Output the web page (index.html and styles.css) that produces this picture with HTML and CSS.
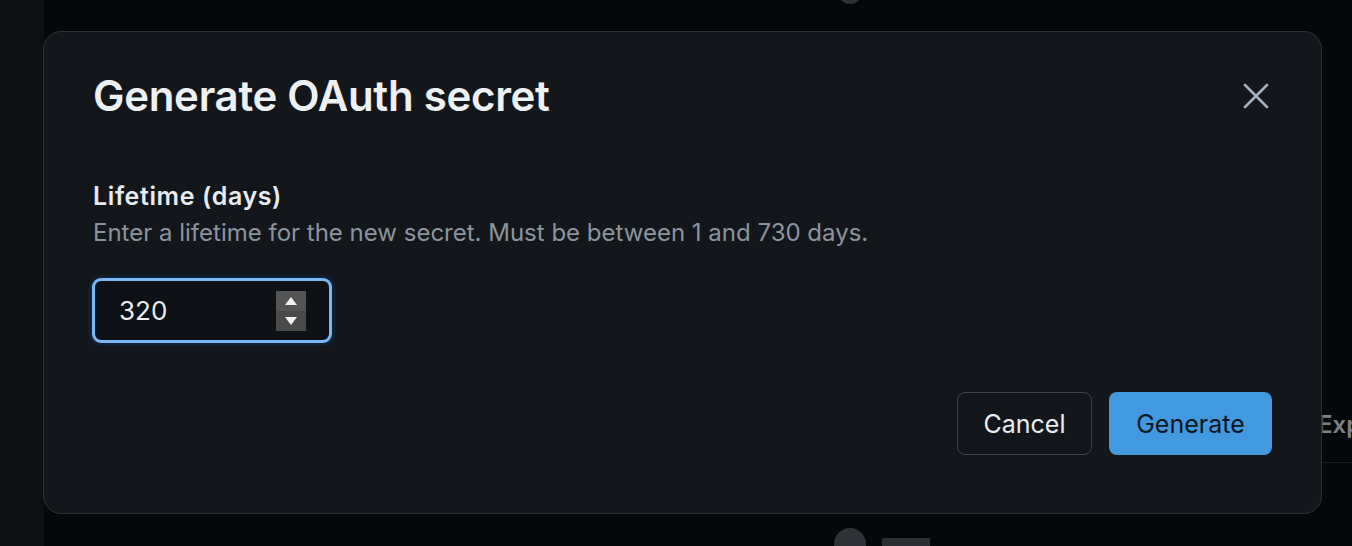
FILE: index.html
```html
<!DOCTYPE html>
<html lang="en">
<head>
<meta charset="utf-8">
<title>Generate OAuth secret</title>
<link rel="stylesheet" href="styles.css">
</head>
<body>
<div class="page">
  <div class="sidebar"></div>
  <div class="dot dot-top"></div>
  <div class="dot dot-bottom"></div>
  <div class="bar-bottom"></div>
  <div class="exp">Exp</div>
  <div class="exp-line"></div>

  <div class="modal" role="dialog" aria-labelledby="dlg-title">
    <header class="modal-header">
      <h1 id="dlg-title" class="modal-title">Generate OAuth secret</h1>
      <button class="close" aria-label="Close">
        <svg viewBox="0 0 28 28" width="28" height="28"><path d="M3 3 L25 25 M25 3 L3 25" stroke="#a3b3c2" stroke-width="2.6" stroke-linecap="round" fill="none"/></svg>
      </button>
    </header>
    <div class="field">
      <label class="field-label">Lifetime (days)</label>
      <p class="field-hint">Enter a lifetime for the new secret. Must be between 1 and 730 days.</p>
      <div class="number-input">
        <span class="number-value">320</span>
        <span class="spinner">
          <span class="spin-up"><svg viewBox="0 0 14 10" width="14" height="10"><path d="M7 1 L13 9 L1 9 Z" fill="#f2f2f2"/></svg></span>
          <span class="spin-down"><svg viewBox="0 0 14 10" width="14" height="10"><path d="M1 1 L13 1 L7 9 Z" fill="#f2f2f2"/></svg></span>
        </span>
      </div>
    </div>
    <footer class="modal-footer">
      <button class="btn btn-secondary">Cancel</button>
      <button class="btn btn-primary">Generate</button>
    </footer>
  </div>
</div>
</body>
</html>
```

FILE: styles.css
```css
* { box-sizing: border-box; }
html, body { margin: 0; padding: 0; }
body {
  background: #05080b;
  font-family: Inter, "Noto Sans", "Liberation Sans", sans-serif;
  width: 1352px;
  height: 546px;
  overflow: hidden;
}
.page {
  position: relative;
  width: 1352px;
  height: 546px;
  background: #05080b;
}
.sidebar {
  position: absolute;
  left: 0; top: 0;
  width: 44px; height: 546px;
  background: #0c1013;
}
.dot {
  position: absolute;
  border-radius: 50%;
  background: #2e3237;
}
.dot-top { left: 838px; top: -20px; width: 24px; height: 24px; }
.dot-bottom { left: 834px; top: 528px; width: 32px; height: 32px; }
.bar-bottom {
  position: absolute;
  left: 882px; top: 538px;
  width: 48px; height: 12px;
  background: #2b2f34;
}
.exp {
  position: absolute;
  left: 1318px; top: 410px;
  font-size: 24px;
  font-weight: 600;
  color: #7d8186;
}
.exp-line {
  position: absolute;
  left: 1321px; top: 462px;
  width: 31px; height: 1px;
  background: #1a1d21;
}
.modal {
  position: absolute;
  left: 43px; top: 31px;
  width: 1279px; height: 483px;
  background: #13171c;
  border: 1px solid #2d3238;
  border-radius: 18px;
  padding: 36px 49px 0 49px;
  display: flex;
  flex-direction: column;
  box-shadow: 0 0 0 1px rgba(0,0,0,0.3);
}
.modal-header {
  display: flex;
  align-items: center;
  justify-content: space-between;
}
.modal-title {
  margin: 0;
  font-size: 42px;
  line-height: 56px;
  font-weight: 600;
  color: #eef1f4;
  letter-spacing: -0.3px;
}
.close {
  background: none;
  border: 0;
  padding: 0;
  margin-right: 2px;
  width: 28px;
  height: 28px;
  display: flex;
}
.field {
  margin-top: 56px;
  display: flex;
  flex-direction: column;
  align-items: flex-start;
}
.field-label {
  font-size: 25px;
  line-height: 32px;
  font-weight: 600;
  letter-spacing: 0.6px;
  color: #e6ebf0;
}
.field-hint {
  margin: 5px 0 0 0;
  font-size: 24px;
  line-height: 32px;
  color: #8b949e;
}
.number-input {
  margin-top: 29px;
  width: 240px;
  height: 65px;
  border: 3px solid #7bb9f5;
  border-radius: 9px;
  background: #0e1217;
  box-shadow: 0 0 0 3px #112033;
  display: flex;
  align-items: center;
  justify-content: space-between;
  padding: 0 23px 0 24px;
  margin-left: -1px;
}
.number-value {
  font-size: 26px;
  color: #e8edf2;
}
.spinner {
  display: flex;
  flex-direction: column;
  width: 30px;
  height: 40px;
}
.spin-up, .spin-down {
  flex: 1;
  display: flex;
  align-items: center;
  justify-content: center;
}
.spin-up { background: #545454; }
.spin-down { background: #4a4a4a; }
.modal-footer {
  margin-top: 49px;
  display: flex;
  justify-content: flex-end;
  gap: 17px;
}
.btn {
  height: 63px;
  border-radius: 8px;
  font-family: inherit;
  font-size: 25px;
  padding: 0;
}
.btn-secondary {
  background: transparent;
  border: 1.5px solid #3e444b;
  color: #e8edf2;
  width: 135px;
}
.btn-primary {
  background: #4399e0;
  border: 0;
  color: #0b1621;
  width: 163px;
}
```
